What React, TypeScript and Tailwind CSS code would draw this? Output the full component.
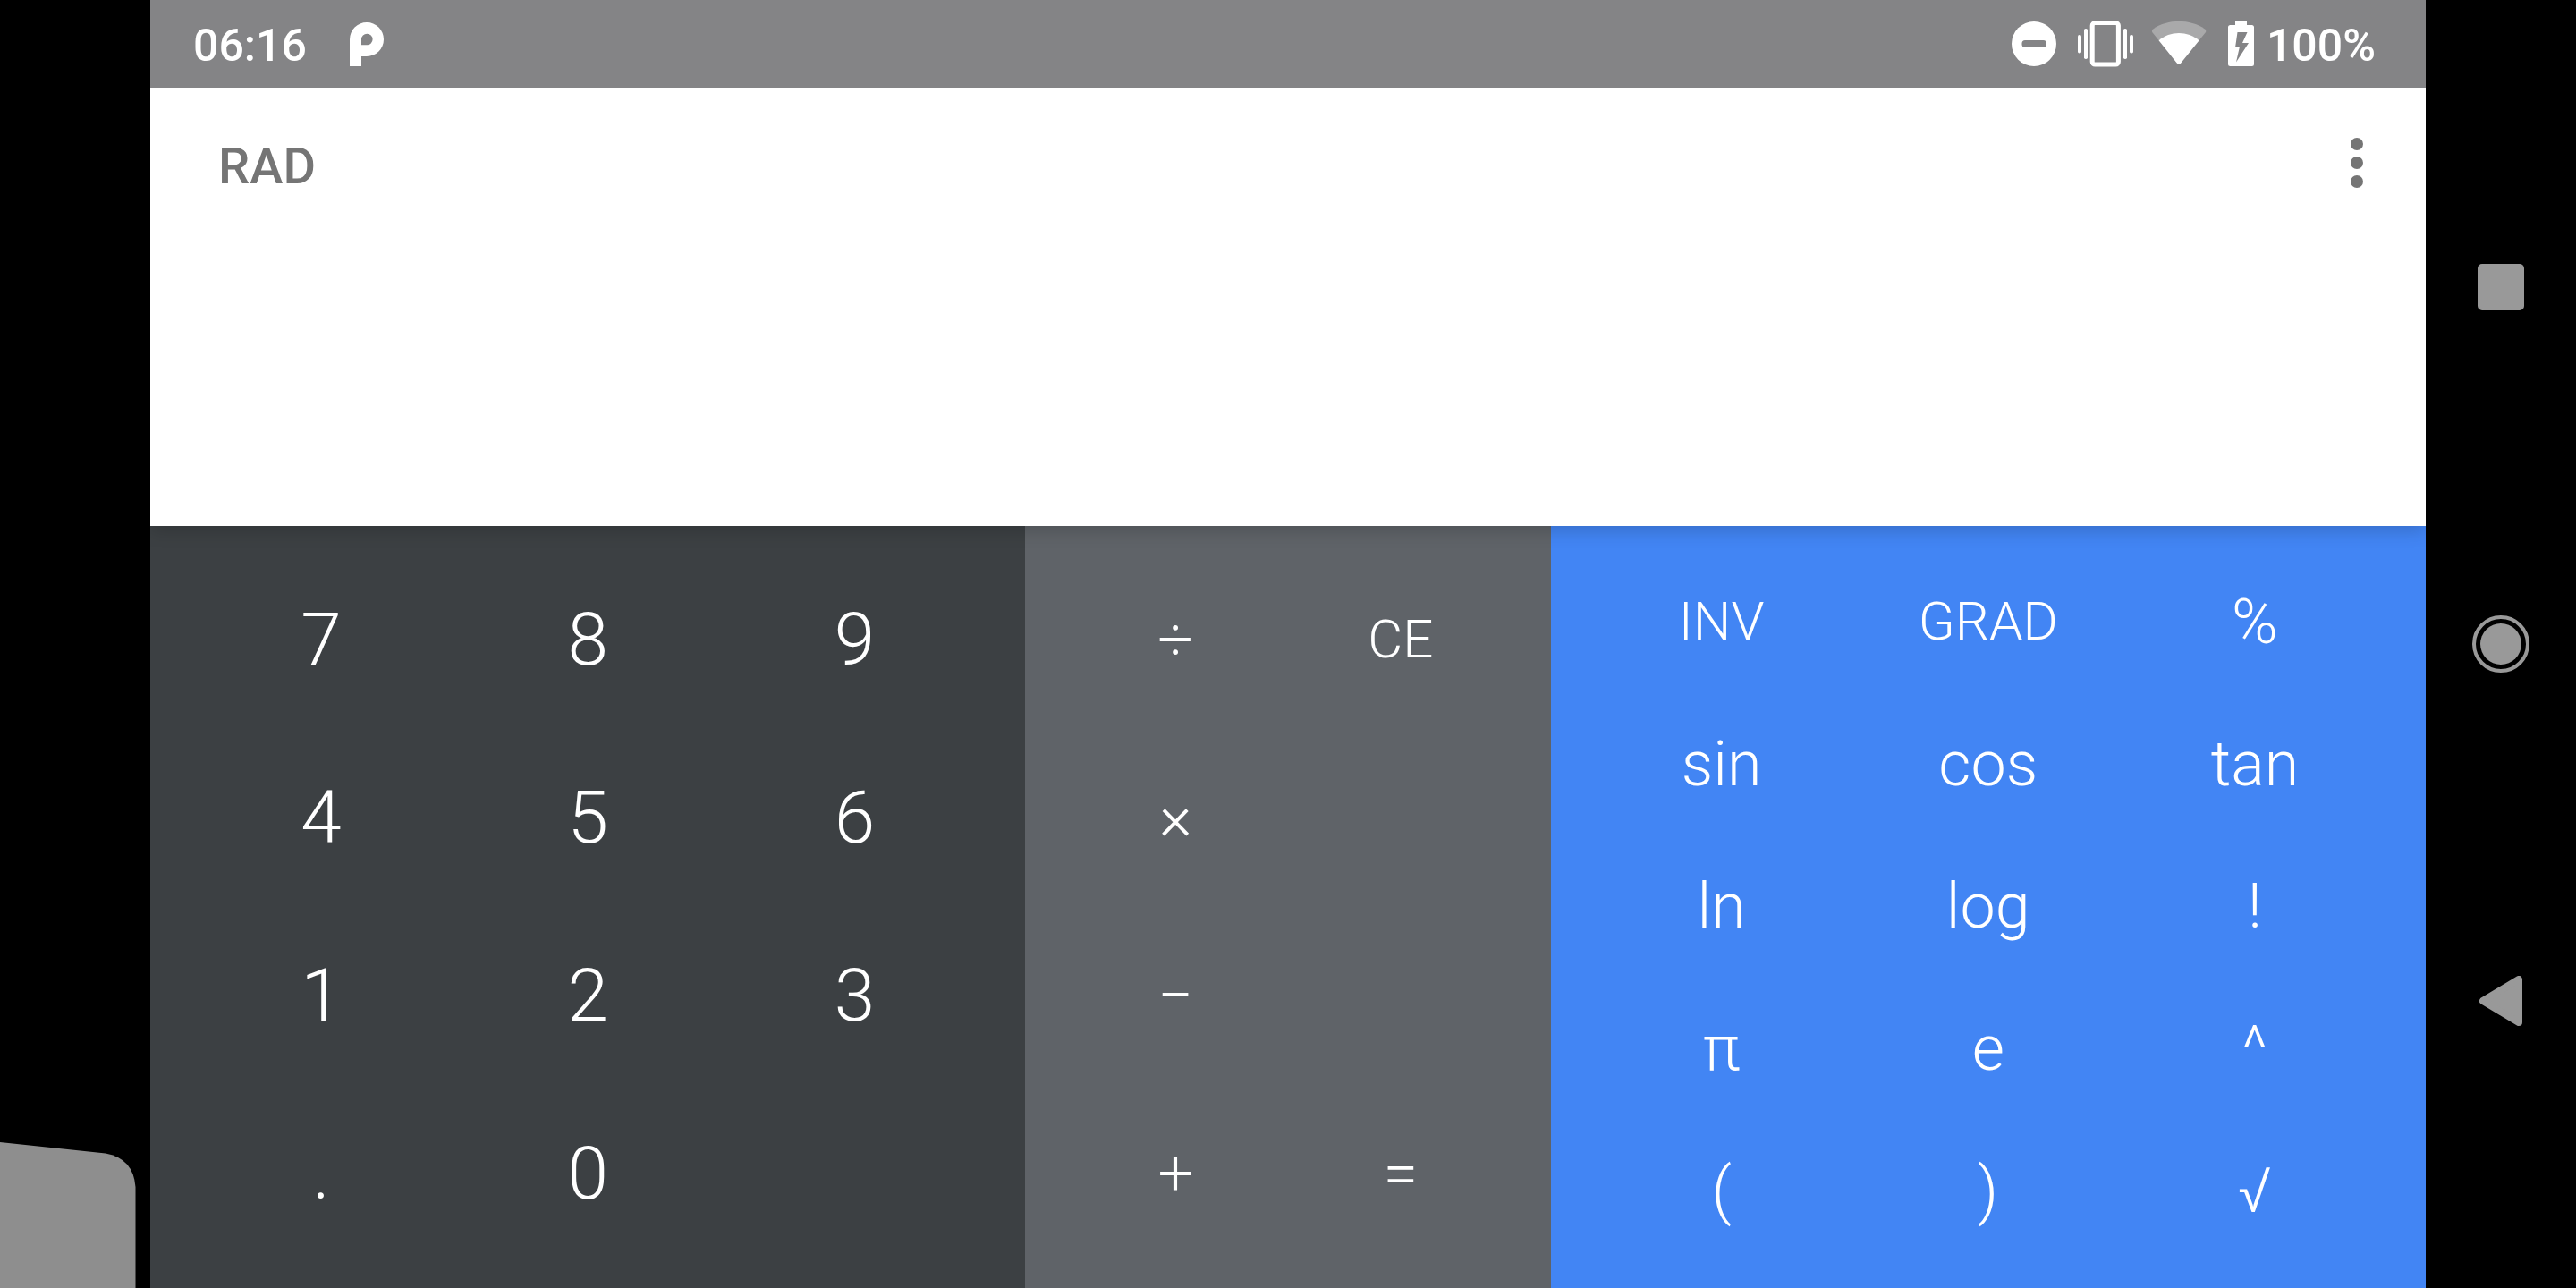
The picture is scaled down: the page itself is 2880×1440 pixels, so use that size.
import React, { useState } from "react";

type Key = { label: string; name?: string; small?: boolean } | null;

const digitKeys: Key[] = [
  { label: "7" }, { label: "8" }, { label: "9" },
  { label: "4" }, { label: "5" }, { label: "6" },
  { label: "1" }, { label: "2" }, { label: "3" },
  { label: ".", name: "point" }, { label: "0" }, null,
];

const operatorKeys: Key[] = [
  { label: "÷", name: "divide" }, { label: "CE", name: "clear entry", small: true },
  { label: "×", name: "multiply" }, null,
  { label: "−", name: "minus" }, null,
  { label: "+", name: "plus" }, { label: "=", name: "equals" },
];

const functionKeys: Key[] = [
  { label: "INV", name: "inverse", small: true }, { label: "GRAD", name: "gradians", small: true }, { label: "%", name: "percent" },
  { label: "sin" }, { label: "cos" }, { label: "tan" },
  { label: "ln" }, { label: "log" }, { label: "!", name: "factorial" },
  { label: "π", name: "pi" }, { label: "e" }, { label: "^", name: "power" },
  { label: "(", name: "left parenthesis" }, { label: ")", name: "right parenthesis" }, { label: "√", name: "square root" },
];

function Pad({ label, keys, className, textClass, onKey }: {
  label: string;
  keys: Key[];
  className: string;
  textClass: string;
  onKey: (key: string) => void;
}) {
  return (
    <section aria-label={label} className={`grid auto-rows-fr px-[42px] pt-[27px] pb-[29px] ${className}`}>
      {keys.map((key, i) =>
        key ? (
          <button
            key={key.label}
            type="button"
            aria-label={key.name}
            onClick={() => onKey(key.label)}
            className={`flex items-center justify-center leading-none font-light text-white ${key.small ? "text-[60px]" : textClass}`}
          >
            {key.label}
          </button>
        ) : (
          <span key={i} aria-hidden="true" />
        ),
      )}
    </section>
  );
}

function PocketIcon() {
  return (
    <svg width="38" height="49" viewBox="0 0 38 49" fill="#fff" fillRule="evenodd" aria-hidden="true">
      <path d="M0 49V19A19 19 0 1 1 19 38H13V49ZM13 25.3V19A6.3 6.3 0 1 1 19.3 25.3Z" />
    </svg>
  );
}

function DoNotDisturbIcon() {
  return (
    <svg width="52" height="52" viewBox="0 0 52 52" aria-hidden="true">
      <circle cx="25" cy="26" r="25" fill="#fff" />
      <rect x="11.5" y="22" width="27.5" height="8" rx="3.5" fill="#848486" />
    </svg>
  );
}

function VibrateIcon() {
  return (
    <svg width="64" height="52" viewBox="0 0 64 52" fill="#fff" aria-hidden="true">
      <rect x="18.2" y="2.6" width="29.2" height="46.4" rx="3" fill="none" stroke="#fff" strokeWidth="5" />
      <rect x="2" y="16" width="4" height="20.5" rx="1.8" />
      <rect x="9" y="9" width="4" height="34" rx="1.8" />
      <rect x="53" y="9" width="4" height="34" rx="1.8" />
      <rect x="60" y="16" width="4" height="20.5" rx="1.8" />
    </svg>
  );
}

function WifiIcon() {
  return (
    <svg width="63" height="52" viewBox="0 0 63 52" fill="#fff" aria-hidden="true">
      <path d="M1.6 13.5Q0 11.2 2.2 9.4C19-2.1 43-2.1 60 9.4Q62.2 11.2 60.6 13.5L33 47.6Q31 49.6 29 47.6Z" opacity="0.3" />
      <path d="M8.6 22.2C21 11.2 41 11.2 53.6 22.2L33 47.8Q31 49.8 29 47.8Z" />
    </svg>
  );
}

function BatteryIcon() {
  return (
    <svg width="32" height="52" viewBox="0 0 32 52" aria-hidden="true">
      <path d="M11 0H24V5H29.5Q32 5 32 7.5V48.500Q32 51 29.500 51H5.500Q3 51 3 48.500V7.500Q3 5 5.500 5H11Z" fill="#fff" />
      <path d="M13.500 13H24.500L19 25H26L12 46.500L16 29H11.200Z" fill="#848486" />
    </svg>
  );
}

export default function App() {
  const [entry, setEntry] = useState("");
  const press = (key: string) => setEntry((v) => (key === "CE" ? v.slice(0, -1) : v + key));

  return (
    <div className="flex min-h-screen bg-black font-['Roboto',sans-serif]">
      <aside className="flex w-[168px] shrink-0 items-end">
        <svg width="152" height="163" viewBox="0 0 152 163" aria-hidden="true">
          <path d="M0 0L118 12.500Q149 18 151.500 50V163H0Z" fill="#8e8e8e" />
        </svg>
      </aside>

      <main className="flex min-w-0 flex-1 flex-col overflow-hidden">
        <header className="relative z-20 flex h-[98px] shrink-0 items-center justify-between bg-[#848486] pr-14 pl-12 text-[50px] leading-none font-medium text-white">
          <div className="flex items-center gap-12">
            <time className="pt-1">06:16</time>
            <PocketIcon />
          </div>
          <div className="flex items-center gap-5">
            <DoNotDisturbIcon />
            <VibrateIcon />
            <WifiIcon />
            <div className="flex items-center gap-3.5">
              <BatteryIcon />
              <span className="pt-1">100%</span>
            </div>
          </div>
        </header>

        <section aria-label="Display" className="relative z-10 flex h-[490px] shrink-0 flex-col bg-white px-[70px] pt-14 shadow-[0_4px_20px_rgba(0,0,0,0.2)]">
          <div className="flex items-center justify-between">
            <button type="button" className="px-1.5 pt-0.5 text-[56px] leading-[60px] font-medium text-[#757575]">RAD</button>
            <button type="button" aria-label="More options" className="pb-1.5">
              <svg width="14" height="56" viewBox="0 0 14 56" fill="#757575" aria-hidden="true">
                <circle cx="7" cy="7" r="7" />
                <circle cx="7" cy="28" r="7" />
                <circle cx="7" cy="49" r="7" />
              </svg>
            </button>
          </div>
          <input
            type="text"
            aria-label="Formula"
            readOnly
            value={entry}
            className="w-full flex-1 bg-transparent text-right text-[120px] font-light text-[#757575] outline-none"
          />
        </section>

        <div className="grid flex-1 grid-cols-[5fr_3fr_5fr]">
          <Pad label="Digits" keys={digitKeys} className="grid-cols-3 bg-[#3c4043]" textClass="text-[82px]" onKey={press} />
          <Pad label="Operators" keys={operatorKeys} className="grid-cols-2 bg-[#5f6368]" textClass="text-[70px]" onKey={press} />
          <Pad label="Functions" keys={functionKeys} className="grid-cols-3 bg-[#4285f4]" textClass="text-[70px]" onKey={press} />
        </div>
      </main>

      <nav aria-label="System" className="flex w-[168px] shrink-0 flex-col py-[122px]">
        <button type="button" aria-label="Recent apps" className="flex flex-1 items-center justify-center">
          <span className="size-[52px] rounded-[5px] bg-[#999]" />
        </button>
        <button type="button" aria-label="Home" className="flex flex-1 items-center justify-center">
          <svg width="64" height="64" viewBox="0 0 64 64" aria-hidden="true">
            <circle cx="32" cy="32" r="30" fill="none" stroke="#999" strokeWidth="4" />
            <circle cx="32" cy="32" r="23" fill="#999" />
          </svg>
        </button>
        <button type="button" aria-label="Back" className="flex flex-1 items-center justify-center">
          <svg width="48" height="56" viewBox="0 0 48 56" aria-hidden="true">
            <path d="M4 28L44 4V52Z" fill="#999" stroke="#999" strokeWidth="8" strokeLinejoin="round" />
          </svg>
        </button>
      </nav>
    </div>
  );
}
